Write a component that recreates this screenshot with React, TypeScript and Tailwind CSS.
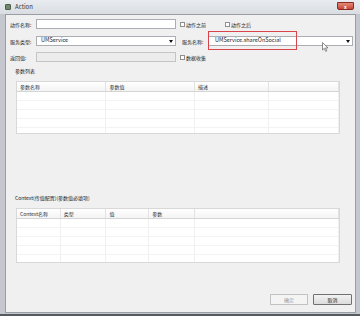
import React from "react";

const font = { fontFamily: '"Noto Sans CJK SC", "Noto Sans", sans-serif' };

function Check({ label }: { label: string }) {
  return (
    <div className="flex items-center gap-[1px]">
      <span className="w-[5px] h-[5px] border border-[#8f8f8f] bg-white" />
      <span className="text-[5px] leading-none text-[#222]">{label}</span>
    </div>
  );
}

function Arrow() {
  return (
    <svg width="4" height="3" viewBox="0 0 4 3">
      <path d="M0 0 L4 0 L2 3 Z" fill="#111" />
    </svg>
  );
}

function Grid({
  cols,
  heads,
  height,
}: {
  cols: number[];
  heads: string[];
  height: number;
}) {
  const rows = [0, 1, 2, 3, 4];
  return (
    <div
      className="ml-[10px] w-[324px] border border-[#d8d8d8] bg-white overflow-hidden"
      style={{ height }}
    >
      <div className="flex h-[10px] border-b border-[#d5d5d5] bg-gradient-to-b from-white to-[#f4f4f4]">
        {cols.map((w, i) => (
          <div
            key={i}
            className="h-full border-r border-[#e2e2e2] pl-[3px] flex items-center text-[5px] leading-none text-[#333]"
            style={{ width: w }}
          >
            {heads[i] ?? ""}
          </div>
        ))}
      </div>
      {rows.map((r) => (
        <div key={r} className="flex h-[9px] border-b border-[#f3f3f3]">
          {cols.map((w, i) => (
            <div key={i} className="h-full border-r border-[#f0f0f0]" style={{ width: w }} />
          ))}
        </div>
      ))}
    </div>
  );
}

export default function App() {
  return (
    <div
      className="w-[360px] h-[316px] bg-[#c4c8ce] flex flex-col relative overflow-hidden"
      style={font}
    >
      {/* title bar */}
      <div className="h-[14px] flex items-center bg-gradient-to-b from-[#e9ecf0] to-[#d9dde2] pl-[5px] relative">
        <div className="w-[6px] h-[6px] rounded-[1px] bg-[#6f8a6a] border border-[#4d5d4b]" />
        <span className="ml-[4px] text-[6px] leading-none text-[#333]">Action</span>
        <div className="absolute right-[6px] top-[2px] w-[17px] h-[8px] rounded-b-[2px] bg-gradient-to-b from-[#e58a76] to-[#c4453a] border border-[#8b2a20] flex items-center justify-center">
          <span className="text-[5px] leading-none text-white font-bold">x</span>
        </div>
      </div>

      {/* client */}
      <div className="flex-1 ml-[5px] mr-[4px] mb-[3px] bg-[#f0f0f0] border border-[#9a9ea4] flex flex-col relative">
        {/* row 1 */}
        <div className="flex items-center h-[10px] mt-[4px] pl-[4px]">
          <span className="w-[26px] text-[5px] leading-none text-[#222]">动作名称:</span>
          <div className="w-[140px] h-[10px] bg-white border border-[#abadb3]" />
          <div className="ml-[4px]">
            <Check label="动作之前" />
          </div>
          <div className="ml-[19px]">
            <Check label="动作之后" />
          </div>
        </div>

        {/* row 2 */}
        <div className="flex items-center h-[10px] mt-[7px] pl-[4px]">
          <span className="w-[26px] text-[5px] leading-none text-[#222]">服务类型:</span>
          <div className="w-[140px] h-[10px] bg-white border border-[#abadb3] flex items-center justify-between pl-[4px] pr-[2px]">
            <span className="text-[5.5px] leading-none text-[#222]">UMService</span>
            <Arrow />
          </div>
          <span className="ml-[6px] w-[26px] text-[5px] leading-none text-[#222]">服务名称:</span>
          <div className="w-[145px] h-[10px] bg-white border border-[#abadb3] flex items-center justify-between pl-[6px] pr-[2px]">
            <span className="text-[5.5px] leading-none text-[#222]">UMService.shareOnSocial</span>
            <Arrow />
          </div>
        </div>

        {/* row 3 */}
        <div className="flex items-center h-[10px] mt-[6px] pl-[4px]">
          <span className="w-[26px] text-[5px] leading-none text-[#222]">返回值:</span>
          <div className="w-[140px] h-[10px] bg-[#ececec] border border-[#c4c4c4]" />
          <div className="ml-[4px]">
            <Check label="数据收集" />
          </div>
        </div>

        <div className="mt-[6px] pl-[9px] text-[5px] leading-none text-[#222]">参数列表</div>
        <div className="mt-[8px]">
          <Grid cols={[90, 89, 75, 70]} heads={["参数名称", "参数值", "描述", ""]} height={53} />
        </div>

        <div className="mt-[61px] pl-[9px] text-[5px] leading-none text-[#222]">
          Context(传值配置)(参数值必填项)
        </div>
        <div className="mt-[8px]">
          <Grid
            cols={[44, 46, 43, 46, 145]}
            heads={["Context名称", "类型", "值", "参数", ""]}
            height={55}
          />
        </div>

        <div className="mt-auto mb-[7px] flex justify-end gap-[5px] pr-[3px]">
          <div className="w-[38px] h-[11px] border border-[#c2c2c2] bg-[#f4f4f4] flex items-center justify-center text-[5px] leading-none text-[#9a9a9a]">
            确定
          </div>
          <div className="w-[39px] h-[11px] border border-[#707070] rounded-[1px] bg-gradient-to-b from-[#f2f2f2] to-[#dcdcdc] flex items-center justify-center text-[5px] leading-none text-[#222]">
            取消
          </div>
        </div>

        {/* highlight box and mouse cursor */}
        <div className="absolute left-[202px] top-[16px] w-[89px] h-[19px] border border-[#d9434a]" />
        <svg className="absolute left-[316px] top-[27px]" width="7" height="10" viewBox="0 0 7 10">
          <path d="M0.5 0.5 L0.5 8 L2.3 6.3 L3.6 9.3 L4.8 8.8 L3.5 5.9 L6 5.9 Z" fill="#fff" stroke="#444" strokeWidth="0.6" />
        </svg>
      </div>
      <div className="absolute left-0 right-0 bottom-0 h-[2px] bg-[#555a60]" />
    </div>
  );
}
